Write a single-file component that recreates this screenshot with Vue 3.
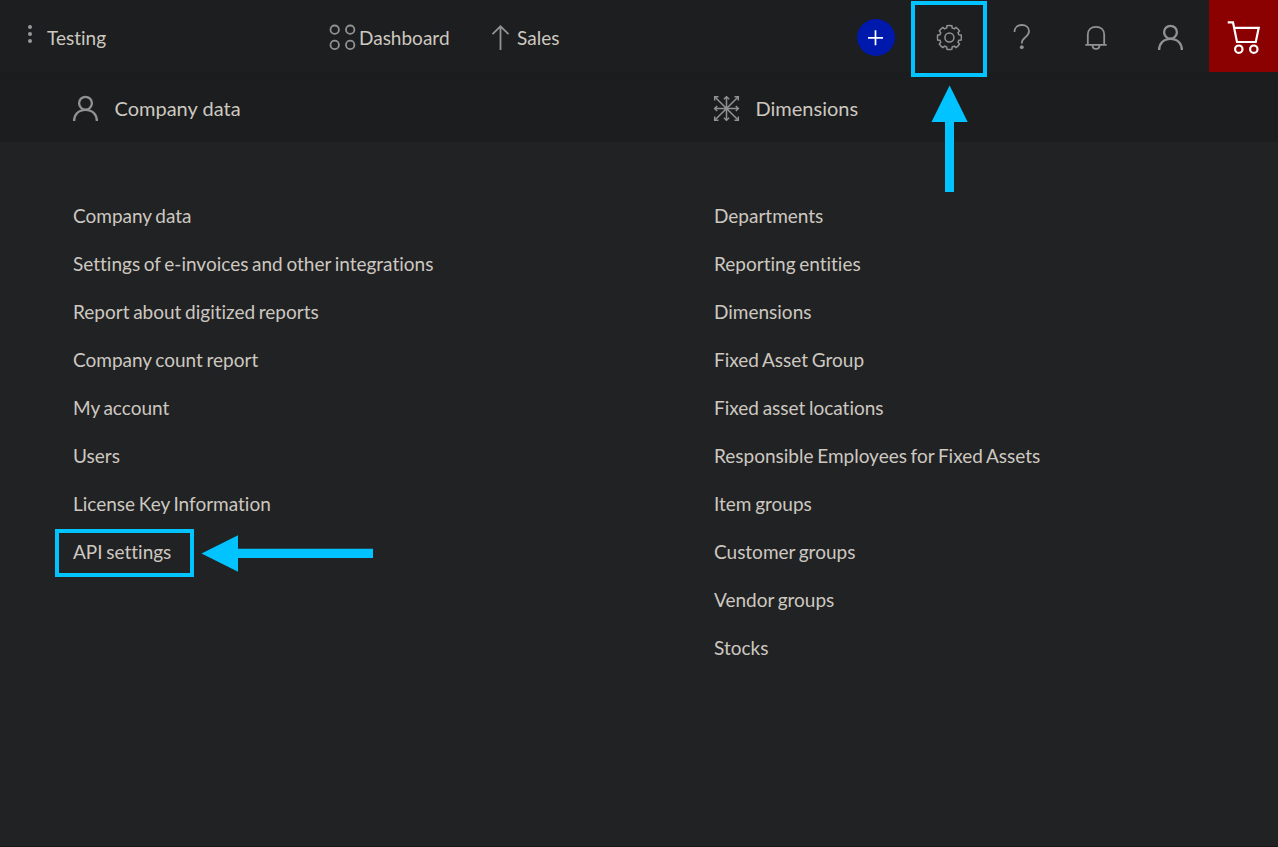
<script setup>
const companyLinks = [
  'Company data',
  'Settings of e-invoices and other integrations',
  'Report about digitized reports',
  'Company count report',
  'My account',
  'Users',
  'License Key Information',
  'API settings',
]
const dimensionLinks = [
  'Departments',
  'Reporting entities',
  'Dimensions',
  'Fixed Asset Group',
  'Fixed asset locations',
  'Responsible Employees for Fixed Assets',
  'Item groups',
  'Customer groups',
  'Vendor groups',
  'Stocks',
]

// Eight-toothed gear outline around (13, 13).
const gearPoint = (radius, degrees) => {
  const a = (degrees * Math.PI) / 180
  return `${(13 + radius * Math.cos(a)).toFixed(2)} ${(13 + radius * Math.sin(a)).toFixed(2)}`
}
const gearPath = Array.from({ length: 8 }, (_, i) => {
  const c = i * 45
  return `${i ? 'L' : 'M'}${gearPoint(9.9, c - 16)}L${gearPoint(12, c - 12)}A12 12 0 0 1 ${gearPoint(12, c + 12)}L${gearPoint(9.9, c + 16)}Q${gearPoint(9.6, c + 22.5)} ${gearPoint(9.9, c + 29)}`
}).join('') + 'Z'
</script>

<template>
  <div class="page">
    <header class="topbar">
      <div class="company">
        <svg class="kebab" width="6" height="20" viewBox="0 0 6 20">
          <circle cx="3" cy="3" r="2" /><circle cx="3" cy="10" r="2" /><circle cx="3" cy="17" r="2" />
        </svg>
        <span>Testing</span>
      </div>
      <nav class="nav">
        <a class="nav-item dashboard">
          <svg class="line" width="26" height="26" viewBox="0 0.5 26 26">
            <circle cx="5.700" cy="5.200" r="4.200" /><circle cx="21.200" cy="5.200" r="4.200" />
            <circle cx="5.700" cy="20.400" r="4.200" /><circle cx="21.200" cy="20.400" r="4.200" />
          </svg>
          <span>Dashboard</span>
        </a>
        <a class="nav-item sales">
          <svg class="line" width="18" height="26" viewBox="0.5 0.5 18 26">
            <path d="M9 25.500V1.800M1 9.600L9 1.800l8 7.800" />
          </svg>
          <span>Sales</span>
        </a>
      </nav>
      <div class="actions">
        <button class="add">
          <svg width="16" height="16" viewBox="0 0 16 16"><path d="M7.500 .3v15M0 7.800h15" /></svg>
        </button>
        <button class="tool highlight gear">
          <svg class="line thin" width="26" height="26" viewBox="0.6 -0.5 26 26">
            <path :d="gearPath" /><circle cx="13" cy="13" r="4.500" />
          </svg>
        </button>
        <button class="tool help">
          <svg class="line" width="18" height="26" viewBox="0 0.5 18 26">
            <path d="M1.500 8.400C1.500 4 4.600 1.500 8.800 1.500s7.200 2.500 7.200 6.300c0 3.100-1.700 4.500-3.900 6.100C9.800 15.600 8.800 16.800 8.800 20" />
            <circle class="dot" cx="8.800" cy="23.700" r="1.900" />
          </svg>
        </button>
        <button class="tool bell">
          <svg class="line" width="22" height="26" viewBox="0 0 22 26">
            <path d="M.3 19.800H21.700M2.800 19.800V9.800C2.800 4.800 6.200 1.900 11 1.900s8.200 2.900 8.200 7.900v10M7.500 20.200c0 2.300 1.500 3.700 3.500 3.700s3.500-1.400 3.500-3.700" />
          </svg>
        </button>
        <button class="tool user">
          <svg class="line person" width="26" height="26" viewBox="0.5 0.5 26 26">
            <circle cx="13" cy="7.700" r="6.400" />
            <path d="M1.600 25.500C1.600 19 6 14.300 13 14.300S24.400 19 24.400 25.500" />
          </svg>
        </button>
        <button class="cart">
          <svg width="34" height="34" viewBox="0 0.4 34 34">
            <path d="M.7 1.700H6L10 21.400H28.800L31.700 7.300H7.200" />
            <circle cx="11.800" cy="28.600" r="3.700" /><circle cx="26.800" cy="28.600" r="3.700" />
          </svg>
        </button>
      </div>
    </header>

    <section class="headings">
      <h2>
        <svg class="line person" width="26" height="26" viewBox="0.5 0.5 26 26">
          <circle cx="13" cy="7.700" r="6.400" />
          <path d="M1.600 25.500C1.600 19 6 14.300 13 14.300S24.400 19 24.400 25.500" />
        </svg>
        <span>Company data</span>
      </h2>
      <h2>
        <svg class="line thin" width="26" height="26" viewBox="0.5 0.5 26 26">
          <path d="M13 1v24M1 13h24M1.200 1.200l23.600 23.600M24.800 1.200L1.200 24.800" />
          <path d="M10.400 3.700L13 1.200l2.600 2.500M10.400 22.300l2.600 2.500 2.600-2.500M3.700 10.400L1.200 13l2.500 2.600M22.300 10.400l2.500 2.600-2.500 2.600" />
          <path d="M1.200 5V1.200H5M21 1.200H24.800V5M1.200 21V24.800H5M21 24.800H24.800V21" />
        </svg>
        <span>Dimensions</span>
      </h2>
    </section>

    <main class="menus">
      <ul>
        <li v-for="link in companyLinks" :key="link">
          <a>{{ link }}</a>
          <template v-if="link === 'API settings'">
            <span class="link-frame"></span>
            <svg class="arrow-left" width="173" height="38" viewBox="0 0 173 38">
              <path d="M.5 19.500L37 1.200V14.800H172V24H37V37.800Z" />
            </svg>
          </template>
        </li>
      </ul>
      <ul>
        <li v-for="link in dimensionLinks" :key="link"><a>{{ link }}</a></li>
      </ul>
    </main>

    <svg class="arrow-up" width="38" height="108" viewBox="0 0 38 108">
      <path d="M19.600 .5L37.700 37H24V107H15V37H1.500Z" />
    </svg>
  </div>
</template>

<style>
body { margin: 0; background: #212224; }
</style>

<style scoped>
.page {
  position: relative;
  box-sizing: border-box;
  height: 847px;
  overflow: hidden;
  background: #212224;
  border-bottom: 1px solid #161719;
  color: #cdc8c0;
  font-family: Lato, sans-serif;
  font-size: 19px;
  font-variant-ligatures: none;
  word-spacing: -1.200px;
}
.topbar {
  display: flex;
  height: 72px;
  background: #1c1e1f;
}
.company { display: flex; width: 329px; height: 75px; align-items: center; box-sizing: border-box; padding-left: 27px; }
.kebab { margin: -7px 14px 0 0; fill: #999; }
.nav { display: flex; flex: 1; height: 75px; }
.nav-item { display: flex; align-items: center; }
.dashboard { gap: 4px; }
.sales { margin-left: 42px; gap: 7.500px; }
.line { display: block; flex: none; overflow: visible; fill: none; stroke: #929292; stroke-width: 1.800; }
.thin { stroke-width: 1.500; }
.person { stroke-width: 2.300; }
.dot { fill: #929292; stroke: none; }
.actions { display: flex; height: 72px; }
button { display: flex; align-items: center; justify-content: center; padding: 0; border: 0; background: none; box-sizing: border-box; }
.add { width: 38px; height: 37px; margin: 19px 16px 0 0; border-radius: 50%; background: #0019ad; }
.add svg { fill: none; stroke: #fff; stroke-width: 1.700; }
.tool { height: 76px; }
.highlight { width: 76px; margin-top: 1px; border: 4px solid #00c3ff; }
.gear svg { margin: -4px 0 0 1px; }
.help { width: 70px; }
.help svg { margin-top: -3px; }
.bell { width: 78px; }
.user { width: 74px; }
.bell svg { margin-top: -1px; }
.user svg { margin: -1px 3px 0 0; }
.cart { width: 69px; height: 72px; background: #8b0000; }
.cart svg { fill: none; stroke: #fff; stroke-width: 2.200; margin: 3px 0 0 1px; }
.headings {
  display: grid;
  grid-template-columns: 641px 1fr;
  height: 70px;
  padding-left: 73px;
  background: linear-gradient(#1a1c1d, #1b1d1e 14px);
}
h2 { display: flex; align-items: center; gap: 15.500px; height: 74px; margin: 0; font-size: 20px; font-weight: 400; word-spacing: 0; }
h2 span { margin-top: -2px; }
.menus { display: grid; grid-template-columns: 641px 1fr; padding: 49px 0 0 73px; }
ul { margin: 0; padding: 0; list-style: none; }
li { position: relative; display: flex; align-items: center; height: 48px; }
.link-frame { position: absolute; box-sizing: border-box; left: -18px; top: 2px; width: 139px; height: 48px; border: 4px solid #00c3ff; }
.arrow-left { position: absolute; left: 128px; top: 7px; fill: #00c3ff; }
.arrow-up { position: absolute; left: 930px; top: 85px; fill: #00c3ff; }
</style>
